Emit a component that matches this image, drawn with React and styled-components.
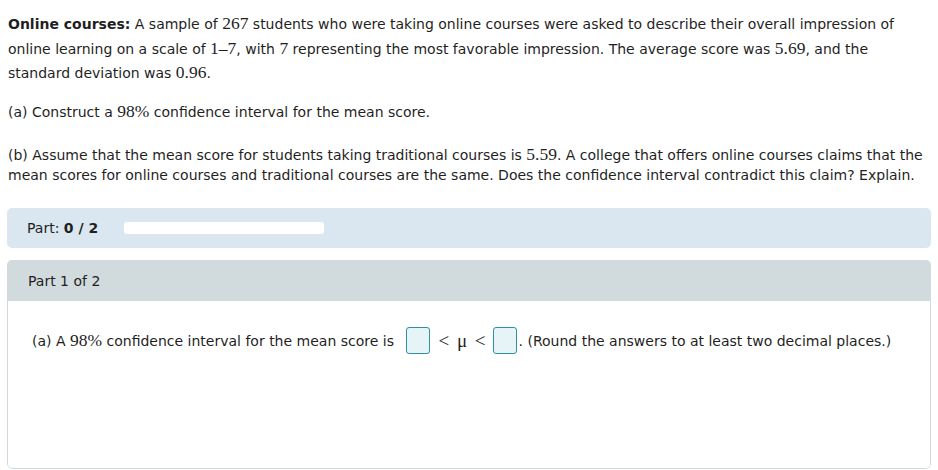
import React from "react";
import styled, { createGlobalStyle } from "styled-components";

const GlobalStyle = createGlobalStyle`
  body {
    margin: 0;
    background: #ffffff;
    color: #1f1f1f;
    font-family: "DejaVu Sans", Verdana, sans-serif;
    font-size: 14px;
  }
`;

const Page = styled.div`
  padding: 12px 7px 0 7px;
  width: 938px;
  box-sizing: border-box;
`;

const Para = styled.p`
  margin: 0 0 ${({ $gap }) => $gap ?? 19}px 1px;
  line-height: ${({ $lh }) => $lh ?? 23.5}px;
`;

const M = styled.span`
  font-family: "Liberation Serif", "Times New Roman", serif;
  font-size: 17.5px;
`;

const Rel = styled(M)`
  font-size: 19px;
  padding: 0 5px 0 6px;
  word-spacing: 3px;
`;

const PartBar = styled.div`
  margin-top: 23px;
  height: 40px;
  background: #dae6f0;
  border-radius: 5px;
  display: flex;
  align-items: center;
  padding-left: 20px;
  gap: 26px;
`;

const Progress = styled.div`
  width: 200px;
  height: 12px;
  background: #ffffff;
  border-radius: 3px;
`;

const Panel = styled.div`
  margin-top: 12px;
  border-radius: 5px;
  overflow: hidden;
`;

const PanelHead = styled.div`
  height: 41px;
  background: #d1dadd;
  display: flex;
  align-items: center;
  padding-left: 21px;
`;

const PanelBody = styled.div`
  height: 141px;
  border: 1px solid #d1dadd;
  border-top: none;
  border-radius: 0 0 5px 5px;
  padding: 26px 0 0 24px;
`;

const Row = styled.div`
  display: flex;
  align-items: center;
  white-space: pre;
`;

const Box = styled.span`
  display: inline-block;
  width: 22px;
  height: 25px;
  border: 1.5px solid #2f8fa3;
  border-radius: 3px;
  background: #e6f4f8;
  margin: 0 2px 0 ${({ $left }) => $left ?? 2}px;
`;

export default function App() {
  return (
    <Page>
      <GlobalStyle />
      <Para $gap={14}>
        <b>Online courses:</b> A sample of <M>267</M> students who were taking online courses were asked to describe their overall impression of online learning on a scale of <M>1–7</M>, with <M>7</M> representing the most favorable impression. The average score was <M>5.69</M>, and the standard deviation was <M>0.96</M>.
      </Para>
      <Para $gap={20}>
        (a) Construct a <M>98%</M> confidence interval for the mean score.
      </Para>
      <Para $lh={20} $gap={0}>
        (b) Assume that the mean score for students taking traditional courses is <M>5.59</M>. A college that offers online courses claims that the mean scores for online courses and traditional courses are the same. Does the confidence interval contradict this claim? Explain.
      </Para>
      <PartBar>
        <span>
          Part: <b>0 / 2</b>
        </span>
        <Progress />
      </PartBar>
      <Panel>
        <PanelHead>Part 1 of 2</PanelHead>
        <PanelBody>
          <Row>
            (a) A <M>98%</M> confidence interval for the mean score is <Box $left={8} /><Rel>&lt; μ &lt;</Rel><Box />. (Round the answers to at least two decimal places.)
          </Row>
        </PanelBody>
      </Panel>
    </Page>
  );
}
